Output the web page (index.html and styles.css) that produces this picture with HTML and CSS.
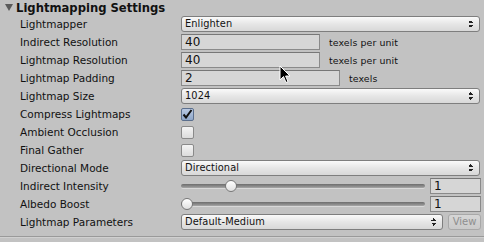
FILE: index.html
```html
<!DOCTYPE html>
<html lang="en">
    <head>
        <meta charset="UTF-8" />
        <title>Lightmapping Settings</title>
        <link rel="stylesheet" href="styles.css">
    </head>
    <body>
        <div class="panel">
            <!-- 标题 -->
            <div class="header">
                <span class="fold"></span>
                <span class="title">Lightmapping Settings</span>
            </div>

            <div class="row">
                <span class="label">Lightmapper</span>
                <div class="popup wide">Enlighten<span class="arrows"></span></div>
            </div>
            <div class="row">
                <span class="label">Indirect Resolution</span>
                <div class="field res">40</div>
                <span class="unit">texels per unit</span>
            </div>
            <div class="row">
                <span class="label">Lightmap Resolution</span>
                <div class="field res">40</div>
                <span class="unit">texels per unit</span>
            </div>
            <div class="row">
                <span class="label">Lightmap Padding</span>
                <div class="field pad">2</div>
                <span class="unit">texels</span>
            </div>
            <div class="row">
                <span class="label">Lightmap Size</span>
                <div class="popup wide">1024<span class="arrows"></span></div>
            </div>
            <div class="row">
                <span class="label">Compress Lightmaps</span>
                <span class="check on">
                    <svg width="11" height="10" viewBox="0 0 11 10"><path d="M1.5 5.5 L4 8.5 L9.5 1" fill="none" stroke="#111" stroke-width="2"/></svg>
                </span>
            </div>
            <div class="row">
                <span class="label">Ambient Occlusion</span>
                <span class="check"></span>
            </div>
            <div class="row">
                <span class="label">Final Gather</span>
                <span class="check"></span>
            </div>
            <div class="row">
                <span class="label">Directional Mode</span>
                <div class="popup wide">Directional<span class="arrows"></span></div>
            </div>
            <div class="row">
                <span class="label">Indirect Intensity</span>
                <div class="slider">
                    <div class="track"></div>
                    <span class="thumb" style="left: 18%"></span>
                </div>
                <div class="field num">1</div>
            </div>
            <div class="row">
                <span class="label">Albedo Boost</span>
                <div class="slider">
                    <div class="track"></div>
                    <span class="thumb" style="left: 0%"></span>
                </div>
                <div class="field num">1</div>
            </div>
            <div class="row">
                <span class="label">Lightmap Parameters</span>
                <div class="popup params">Default-Medium<span class="arrows"></span></div>
                <div class="button off">View</div>
            </div>

            <div class="sep"></div>
        </div>

        <!-- 鼠标指针 -->
        <svg class="cursor" width="12" height="19" viewBox="0 0 12 19">
            <path d="M1 1 L1 15 L4.5 11.5 L7 17.5 L9 16.6 L6.6 11 L11 11 Z" fill="#000" stroke="#fff" stroke-width="1"/>
        </svg>
    </body>
</html>
```

FILE: styles.css
```css
* {
    margin: 0;
    padding: 0;
    box-sizing: border-box;
}
html,
body {
    width: 100%;
    height: 100%;
    overflow: hidden;
}
body {
    background: #c2c2c2;
    font-family: "DejaVu Sans", sans-serif;
    font-size: 10.5px;
    color: #111;
    position: relative;
}
.panel {
    display: flex;
    flex-direction: column;
}
.header {
    display: flex;
    align-items: center;
    height: 15px;
    padding-left: 5px;
}
.fold {
    width: 0;
    height: 0;
    border-left: 4px solid transparent;
    border-right: 4px solid transparent;
    border-top: 7px solid #5a5a5a;
    margin-right: 3px;
}
.title {
    font-weight: bold;
    font-size: 11.6px;
}
.row {
    display: flex;
    align-items: center;
    height: 18px;
}
.label {
    width: 181px;
    padding-left: 20px;
    flex-shrink: 0;
}
.popup {
    position: relative;
    height: 16px;
    line-height: 14px;
    padding-left: 3px;
    font-size: 9.8px;
    letter-spacing: 0.1px;
    border: 1px solid #7e7e7e;
    border-radius: 3px;
    background: linear-gradient(#fafafa, #e6e6e6 50%, #d8d8d8);
}
.popup.wide {
    width: 299px;
}
.popup.params {
    width: 262px;
}
/* 上下小箭头 */
.arrows {
    position: absolute;
    right: 6px;
    top: 3px;
    width: 5px;
    height: 8px;
    background:
        linear-gradient(to bottom right, transparent 50%, #222 50%) left top / 3px 3px no-repeat,
        linear-gradient(to bottom left, transparent 50%, #222 50%) right top / 2px 3px no-repeat,
        linear-gradient(to top right, transparent 50%, #222 50%) left bottom / 3px 3px no-repeat,
        linear-gradient(to top left, transparent 50%, #222 50%) right bottom / 2px 3px no-repeat;
}
.field {
    height: 16px;
    line-height: 14px;
    padding-left: 3px;
    border: 1px solid #8a8a8a;
    border-top-color: #777;
    background: #d6d6d6;
    font-size: 12px;
}
.field.res {
    width: 139px;
}
.field.pad {
    width: 159px;
}
.field.num {
    width: 51px;
    margin-left: 5px;
}
.unit {
    margin-left: 9px;
    font-size: 9.4px;
    letter-spacing: 0.1px;
}
.check {
    display: flex;
    align-items: center;
    justify-content: center;
    width: 13px;
    height: 13px;
    border: 1px solid #8a8a8a;
    border-radius: 2px;
    background: linear-gradient(#f4f4f4, #dcdcdc);
}
.check.on {
    border-color: #5b6f8d;
    background: linear-gradient(#b9c9e2, #8ea6c8);
}
.slider {
    position: relative;
    width: 244px;
    height: 12px;
    display: flex;
    align-items: center;
}
.track {
    width: 100%;
    height: 4px;
    border-radius: 2px;
    background: linear-gradient(#6d6d6d, #8c8c8c 60%, #a8a8a8);
    box-shadow: 0 1px 0 #d8d8d8;
}
.thumb {
    position: absolute;
    top: 0;
    width: 12px;
    height: 12px;
    border-radius: 50%;
    border: 1px solid #777;
    background: linear-gradient(#ffffff, #e0e0e0);
}
.button {
    width: 33px;
    height: 16px;
    margin-left: 5px;
    line-height: 14px;
    font-size: 10px;
    text-align: center;
    border: 1px solid #a8a8a8;
    border-radius: 3px;
    background: linear-gradient(#d6d6d6, #cacaca);
}
.button.off {
    color: #8e8e8e;
}
.sep {
    margin-top: 5px;
    height: 2px;
    background: #9a9a9a;
    border-bottom: 1px solid #d0d0d0;
}
.cursor {
    position: absolute;
    left: 279px;
    top: 65px;
}
```
